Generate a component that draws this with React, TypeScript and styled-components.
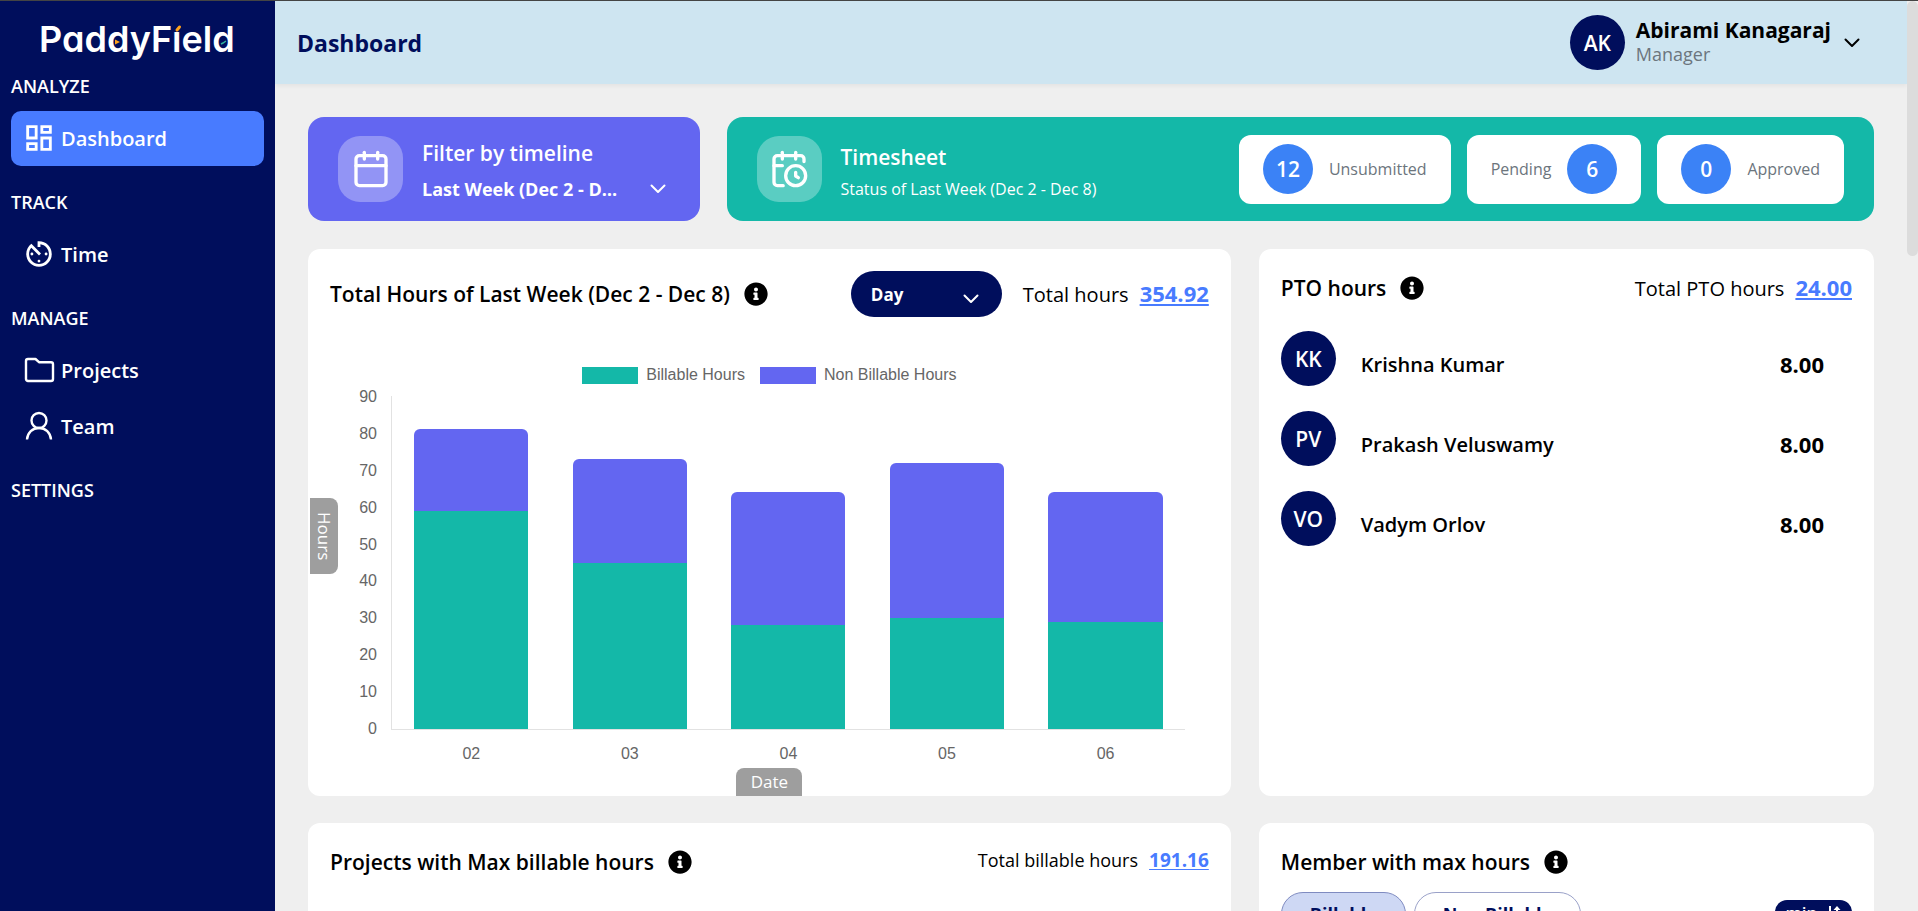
import React from "react";
import styled, { createGlobalStyle } from "styled-components";
import { Calendar, CalendarClock } from "lucide-react";
import { MdAvTimer, MdOutlineDashboard } from "react-icons/md";
import { FaInfoCircle } from "react-icons/fa";

const navy = "#000e5c";
const teal = "#14b8a8";
const indigo = "#6366f1";
const link = "#487bff";

const GlobalStyle = createGlobalStyle`
  *, *::before, *::after { box-sizing: border-box; }
  body {
    margin: 0;
    background: #efefef;
    color: #000;
    font-family: "Open Sans", "Noto Sans", sans-serif;
    font-size: 20px;
  }
  h1, h2, h3, p, ul { margin: 0; padding: 0; }
  ul { list-style: none; }
  button, select { font-family: inherit; border: 0; }
`;

const Page = styled.div`
  display: flex;
  height: 100vh;
  border-top: 1px solid #444;
  overflow: hidden;
`;

/* ---------- sidebar ---------- */

const Sidebar = styled.nav`
  flex: 0 0 275px;
  background: ${navy};
  color: #fff;
  padding: 16px 11px 0;
`;

const Logo = styled.a`
  position: relative;
  display: block;
  margin: 0 0 13px 28px;
  color: #fff;
  font-family: Inter, sans-serif;
  font-size: 36px;
  line-height: 44px;
  font-weight: 600;
  font-feature-settings: "cv11";
  text-decoration: none;
`;

const LogoMarks = styled.svg`
  position: absolute;
  left: 0;
  top: 0;
`;

const SectionLabel = styled.h3`
  font-size: 18px;
  line-height: 24px;
  font-weight: 600;
  margin-bottom: 13px;
`;

const NavList = styled.ul`
  display: flex;
  flex-direction: column;
  gap: 1px;
  margin-bottom: 24px;
`;

const NavLink = styled.a<{ $active?: boolean }>`
  display: flex;
  align-items: center;
  gap: 5px;
  height: 55px;
  padding: 0 11px 1px;
  border-radius: 10px;
  background: ${(p) => (p.$active ? link : "transparent")};
  color: #fff;
  font-size: 20px;
  font-weight: 600;
  text-decoration: none;
`;

/* ---------- top bar ---------- */

const Column = styled.div`
  flex: 1;
  min-width: 0;
  display: flex;
  flex-direction: column;
`;

const TopBar = styled.header`
  flex: 0 0 83px;
  display: flex;
  align-items: center;
  justify-content: space-between;
  padding: 0 46px 0 22px;
  background: #cee5f1;
  box-shadow: 0 2px 4px rgba(0, 0, 0, 0.05);
`;

const PageTitle = styled.h1`
  color: ${navy};
  font-size: 23px;
  line-height: 32px;
  font-weight: 700;
`;

const Profile = styled.button`
  display: flex;
  align-items: center;
  padding: 0;
  background: none;
  text-align: left;
  color: #000;
`;

const Avatar = styled.span`
  flex: none;
  display: flex;
  align-items: center;
  justify-content: center;
  width: 55px;
  height: 55px;
  border-radius: 50%;
  background: ${navy};
  color: #fff;
  font-size: 21px;
  font-weight: 600;
`;

const ProfileText = styled.span`
  display: flex;
  flex-direction: column;
  margin: 0 12px 0 11px;
  padding-bottom: 4px;
`;

const ProfileName = styled.span`
  font-size: 21px;
  line-height: 26px;
  font-weight: 700;
`;

const ProfileRole = styled.span`
  font-size: 18px;
  line-height: 22px;
  color: #6c757d;
`;

/* ---------- content ---------- */

const Content = styled.main`
  flex: 1;
  min-height: 0;
  overflow-y: auto;
  scrollbar-width: none;
  padding: 33px 33px 28px;
`;

const SummaryRow = styled.div`
  display: flex;
  gap: 27px;
  margin-bottom: 28px;
`;

const Banner = styled.section<{ $color: string }>`
  display: flex;
  align-items: center;
  height: 104px;
  padding: 0 30px;
  border-radius: 16px;
  background: ${(p) => p.$color};
  color: #fff;
`;

const FilterBanner = styled(Banner)`
  flex: 0 0 25%;
`;

const TimesheetBanner = styled(Banner)`
  flex: 1;
  min-width: 0;
`;

const IconTile = styled.span`
  flex: none;
  display: flex;
  align-items: center;
  justify-content: center;
  width: 65px;
  height: 66px;
  margin-right: 19px;
  border-radius: 22px;
  background: rgba(255, 255, 255, 0.3);
`;

const BannerText = styled.div<{ $gap: number }>`
  flex: 1;
  min-width: 0;
  display: flex;
  flex-direction: column;
  gap: ${(p) => p.$gap}px;
  padding-top: ${(p) => 12 - p.$gap}px;
`;

const BannerTitle = styled.h2`
  font-size: 21px;
  line-height: 28px;
  font-weight: 600;
`;

const BannerNote = styled.p`
  font-size: 16px;
  line-height: 26px;
`;

const SelectWrap = styled.span`
  position: relative;
  display: flex;
  align-items: center;
`;

const SelectArrow = styled.span`
  position: absolute;
  right: 3px;
  display: flex;
  color: #fff;
  pointer-events: none;
`;

const FilterSelect = styled.select`
  appearance: none;
  width: 100%;
  padding: 0 46px 0 0;
  background: none;
  color: #fff;
  font-size: 18px;
  line-height: 28px;
  font-weight: 700;
  text-overflow: ellipsis;
`;

const StatList = styled.ul`
  display: flex;
  gap: 16px;
`;

const Stat = styled.li<{ $countLast?: boolean }>`
  display: flex;
  flex-direction: ${(p) => (p.$countLast ? "row-reverse" : "row")};
  align-items: center;
  gap: 16px;
  height: 69px;
  padding: 0 24px;
  border-radius: 12px;
  background: #fff;
  color: #6c757d;
  font-size: 16px;
`;

const Count = styled.span`
  display: flex;
  align-items: center;
  justify-content: center;
  width: 50px;
  height: 50px;
  border-radius: 50%;
  background: #3b82f6;
  color: #fff;
  font-size: 21px;
  font-weight: 600;
`;

const CardGrid = styled.div`
  display: grid;
  grid-template-columns: minmax(0, 3fr) minmax(0, 2fr);
  gap: 27px 28px;
`;

const Card = styled.section`
  display: flex;
  flex-direction: column;
  border-radius: 12px;
  background: #fff;
  overflow: hidden;
`;

const CardHead = styled.div<{ $tall?: boolean }>`
  display: flex;
  align-items: center;
  justify-content: space-between;
  padding: ${(p) => (p.$tall ? 22 : 23)}px 22px 0;
`;

const CardTitle = styled.h2`
  display: flex;
  align-items: center;
  gap: 14px;
  font-size: 21px;
  line-height: 32px;
  font-weight: 600;
`;

const Total = styled.p<{ $small?: boolean }>`
  display: flex;
  align-items: baseline;
  align-self: ${(p) => (p.$small ? "flex-start" : "center")};
  gap: 11px;
  font-size: ${(p) => (p.$small ? 18 : 20)}px;
  line-height: 28px;

  a {
    color: ${link};
    font-size: ${(p) => (p.$small ? 19 : 22)}px;
    font-weight: 700;
    text-underline-offset: 2px;
  }
`;

const HeadControls = styled.div`
  display: flex;
  align-items: center;
  gap: 21px;
`;

const PeriodSelect = styled.select`
  appearance: none;
  width: 151px;
  height: 46px;
  padding: 0 20px;
  border-radius: 23px;
  background: ${navy};
  color: #fff;
  font-size: 17px;
  font-weight: 700;
`;

const PeriodArrow = styled(SelectArrow)`
  right: 22px;
  top: 22px;
`;

/* ---------- chart ---------- */

const chartText = `
  font-family: "Liberation Sans", Arial, sans-serif;
  font-size: 16px;
  line-height: 20px;
  color: #666;
`;

const Legend = styled.ul`
  ${chartText}
  display: flex;
  justify-content: center;
  gap: 15px;
  margin: 48px 0 11px;
`;

const LegendItem = styled.li<{ $color: string }>`
  display: flex;
  align-items: center;
  gap: 8px;

  &::before {
    content: "";
    width: 56px;
    height: 17px;
    background: ${(p) => p.$color};
  }
`;

const ChartRow = styled.div`
  display: flex;
  height: 334px;
  padding: 0 46px 0 2px;
`;

const AxisTag = styled.span<{ $vertical?: boolean }>`
  flex: none;
  background: #9e9e9e;
  color: #fff;
  font-size: 17px;
  line-height: 28px;
  ${(p) =>
    p.$vertical
      ? `writing-mode: vertical-rl; height: 76px; margin-top: 102px; border-radius: 0 8px 8px 0; text-align: center;`
      : `align-self: center; width: 66px; border-radius: 8px 8px 0 0; text-align: center;`}
`;

const YAxis = styled.div`
  ${chartText}
  display: flex;
  flex-direction: column;
  justify-content: space-between;
  align-items: flex-end;
  width: 39px;
  margin: -9px 14px -9px 0;
`;

const Plot = styled.div`
  flex: 1;
  display: flex;
  border: solid #e2e2e2;
  border-width: 0 0 1px 1px;
`;

const Day = styled.div`
  flex: 1;
  display: flex;
  flex-direction: column;
  justify-content: flex-end;
  align-items: center;
`;

const Bar = styled.div<{ $color: string; $top?: boolean }>`
  width: 72%;
  background: ${(p) => p.$color};
  border-radius: ${(p) => (p.$top ? "6px 6px 0 0" : "0")};
`;

const XAxis = styled.div`
  ${chartText}
  display: flex;
  margin: 14px 46px 4px 84px;
  text-align: center;

  span {
    flex: 1;
  }
`;

/* ---------- people ---------- */

const People = styled.ul`
  display: flex;
  flex-direction: column;
  gap: 25px;
  padding: 27px 50px 0 22px;
`;

const Person = styled.li`
  display: flex;
  height: 55px;
  line-height: 28px;
`;

const PersonName = styled.span`
  flex: 1;
  margin: 20px 0 0 25px;
  font-size: 20px;
  font-weight: 600;
`;

const PersonHours = styled.span`
  margin-top: 19px;
  font-size: 22px;
  font-weight: 700;
`;

const Filters = styled.div`
  display: flex;
  align-items: flex-start;
  gap: 8px;
  padding: 14px 22px 40px;
`;

const Pill = styled.button<{ $active?: boolean }>`
  height: 44px;
  padding: 0 28px;
  border: 1px solid ${(p) => (p.$active ? "#7f8bc0" : "#9aa1c8")};
  border-radius: 22px;
  background: ${(p) => (p.$active ? "#ced8f4" : "#fff")};
  color: ${navy};
  font-size: 18px;
  font-weight: 700;
`;

const SortButton = styled.button`
  display: flex;
  align-items: center;
  justify-content: center;
  gap: 10px;
  width: 77px;
  height: 24px;
  margin: 8px 0 0 auto;
  padding: 0;
  border-radius: 12px;
  background: ${navy};
  color: #fff;
  font-size: 17px;
  font-weight: 600;
`;

const ScrollTrack = styled.div`
  flex: 0 0 11px;
  background: #efefef;
`;

const ScrollThumb = styled.div`
  height: 28%;
  border-radius: 6px;
  background: #dcdcdc;
`;

/* ---------- icons ---------- */

const Chevron = () => (
  <svg width="18" height="12" viewBox="0 0 18 12" fill="none" stroke="currentColor" strokeWidth="2" strokeLinecap="round" strokeLinejoin="round" aria-hidden="true">
    <path d="M2.500 2.500 9 9l6.500-6.500" />
  </svg>
);

const FolderIcon = () => (
  <svg width="34" height="34" viewBox="0 0 34 34" fill="none" stroke="currentColor" strokeWidth="2.400" strokeLinejoin="round" aria-hidden="true">
    <path d="M4 8a2 2 0 0 1 2-2h7.500l3.500 3.200h12a2 2 0 0 1 2 2V26a2 2 0 0 1-2 2H6a2 2 0 0 1-2-2z" />
  </svg>
);

const PersonIcon = () => (
  <svg width="34" height="34" viewBox="0 0 34 34" fill="none" stroke="currentColor" strokeWidth="2.400" aria-hidden="true">
    <circle cx="17" cy="11.500" r="7.500" />
    <path d="M5 30.500C5.500 23.500 10.500 19 17 19s11.500 4.500 12 11.500" />
  </svg>
);

const SortIcon = () => (
  <svg width="14" height="16" viewBox="0 0 14 16" fill="none" stroke="currentColor" strokeWidth="2" aria-hidden="true">
    <path d="M3 2v12M10 14V3" />
    <path d="M6.500 6 10 2l3.500 4z" fill="currentColor" stroke="none" />
    <path d="M0 11l3 4 3-4z" fill="currentColor" stroke="none" />
  </svg>
);

const Brand = () => (
  <>
    PaddyField
    <LogoMarks width="200" height="44" viewBox="0 0 200 44" aria-hidden="true">
      <path d="M133 6h10v9h-10z" fill={navy} />
      <path d="M138 13 140.500 10" stroke="#ffa21a" strokeWidth="3" strokeLinecap="round" />
      <path d="M76 22.500v5l5-2.500z" fill="#ffa21a" />
      <path d="m182 27 2-1 3-2" fill="none" stroke="#2db6a0" strokeWidth="1.500" />
    </LogoMarks>
  </>
);

const Info = () => <FaInfoCircle size={24} aria-label="More information" />;

/* ---------- data ---------- */

const ticks = [90, 80, 70, 60, 50, 40, 30, 20, 10, 0];
const days = [
  { date: "02", billable: 59, other: 22 },
  { date: "03", billable: 45, other: 28 },
  { date: "04", billable: 28, other: 36 },
  { date: "05", billable: 30, other: 42 },
  { date: "06", billable: 29, other: 35 },
];
const people = [
  { initials: "KK", name: "Krishna Kumar", hours: "8.00" },
  { initials: "PV", name: "Prakash Veluswamy", hours: "8.00" },
  { initials: "VO", name: "Vadym Orlov", hours: "8.00" },
];
const stats = [
  { label: "Unsubmitted", count: 12 },
  { label: "Pending", count: 6, countLast: true },
  { label: "Approved", count: 0 },
];
const share = (value: number) => ({ height: `${(value / 90) * 100}%` });

export default function App() {
  return (
    <>
      <GlobalStyle />
      <Page>
        <Sidebar aria-label="Main">
          <Logo href="#home">
            <Brand />
          </Logo>
          <SectionLabel>ANALYZE</SectionLabel>
          <NavList>
            <li>
              <NavLink href="#dashboard" $active aria-current="page">
                <MdOutlineDashboard size={34} />
                Dashboard
              </NavLink>
            </li>
          </NavList>
          <SectionLabel>TRACK</SectionLabel>
          <NavList>
            <li>
              <NavLink href="#time">
                <MdAvTimer size={34} />
                Time
              </NavLink>
            </li>
          </NavList>
          <SectionLabel>MANAGE</SectionLabel>
          <NavList>
            <li>
              <NavLink href="#projects">
                <FolderIcon />
                Projects
              </NavLink>
            </li>
            <li>
              <NavLink href="#team">
                <PersonIcon />
                Team
              </NavLink>
            </li>
          </NavList>
          <SectionLabel>SETTINGS</SectionLabel>
        </Sidebar>

        <Column>
          <TopBar>
            <PageTitle>Dashboard</PageTitle>
            <Profile type="button">
              <Avatar>AK</Avatar>
              <ProfileText>
                <ProfileName>Abirami Kanagaraj</ProfileName>
                <ProfileRole>Manager</ProfileRole>
              </ProfileText>
              <Chevron />
            </Profile>
          </TopBar>

          <Content>
            <SummaryRow>
              <FilterBanner $color={indigo}>
                <IconTile>
                  <Calendar size={40} />
                </IconTile>
                <BannerText $gap={8}>
                  <BannerTitle as="label" htmlFor="timeline">
                    Filter by timeline
                  </BannerTitle>
                  <SelectWrap>
                    <FilterSelect id="timeline">
                      <option>Last Week (Dec 2 - Dec 8)</option>
                    </FilterSelect>
                    <SelectArrow>
                      <Chevron />
                    </SelectArrow>
                  </SelectWrap>
                </BannerText>
              </FilterBanner>
              <TimesheetBanner $color={teal}>
                <IconTile>
                  <CalendarClock size={40} />
                </IconTile>
                <BannerText $gap={5}>
                  <BannerTitle>Timesheet</BannerTitle>
                  <BannerNote>Status of Last Week (Dec 2 - Dec 8)</BannerNote>
                </BannerText>
                <StatList>
                  {stats.map((s) => (
                    <Stat key={s.label} $countLast={s.countLast}>
                      <Count>{s.count}</Count>
                      {s.label}
                    </Stat>
                  ))}
                </StatList>
              </TimesheetBanner>
            </SummaryRow>

            <CardGrid>
              <Card>
                <CardHead $tall>
                  <CardTitle>
                    Total Hours of Last Week (Dec 2 - Dec 8)
                    <Info />
                  </CardTitle>
                  <HeadControls>
                    <SelectWrap>
                      <PeriodSelect aria-label="Period">
                        <option>Day</option>
                      </PeriodSelect>
                      <PeriodArrow>
                        <Chevron />
                      </PeriodArrow>
                    </SelectWrap>
                    <Total>
                      Total hours <a href="#total">354.92</a>
                    </Total>
                  </HeadControls>
                </CardHead>
                <Legend>
                  <LegendItem $color={teal}>Billable Hours</LegendItem>
                  <LegendItem $color={indigo}>Non Billable Hours</LegendItem>
                </Legend>
                <ChartRow>
                  <AxisTag $vertical>Hours</AxisTag>
                  <YAxis>
                    {ticks.map((t) => (
                      <span key={t}>{t}</span>
                    ))}
                  </YAxis>
                  <Plot>
                    {days.map((d) => (
                      <Day key={d.date}>
                        <Bar $color={indigo} $top style={share(d.other)} />
                        <Bar $color={teal} style={share(d.billable)} />
                      </Day>
                    ))}
                  </Plot>
                </ChartRow>
                <XAxis>
                  {days.map((d) => (
                    <span key={d.date}>{d.date}</span>
                  ))}
                </XAxis>
                <AxisTag>Date</AxisTag>
              </Card>

              <Card>
                <CardHead>
                  <CardTitle>
                    PTO hours
                    <Info />
                  </CardTitle>
                  <Total>
                    Total PTO hours <a href="#pto">24.00</a>
                  </Total>
                </CardHead>
                <People>
                  {people.map((p) => (
                    <Person key={p.initials}>
                      <Avatar>{p.initials}</Avatar>
                      <PersonName>{p.name}</PersonName>
                      <PersonHours>{p.hours}</PersonHours>
                    </Person>
                  ))}
                </People>
              </Card>

              <Card>
                <CardHead>
                  <CardTitle>
                    Projects with Max billable hours
                    <Info />
                  </CardTitle>
                  <Total $small>
                    Total billable hours <a href="#billable">191.16</a>
                  </Total>
                </CardHead>
              </Card>

              <Card>
                <CardHead>
                  <CardTitle>
                    Member with max hours
                    <Info />
                  </CardTitle>
                </CardHead>
                <Filters>
                  <Pill type="button" $active>
                    Billable
                  </Pill>
                  <Pill type="button">Non Billable</Pill>
                  <SortButton type="button">
                    min
                    <SortIcon />
                  </SortButton>
                </Filters>
              </Card>
            </CardGrid>
          </Content>
        </Column>

        <ScrollTrack aria-hidden="true">
          <ScrollThumb />
        </ScrollTrack>
      </Page>
    </>
  );
}
